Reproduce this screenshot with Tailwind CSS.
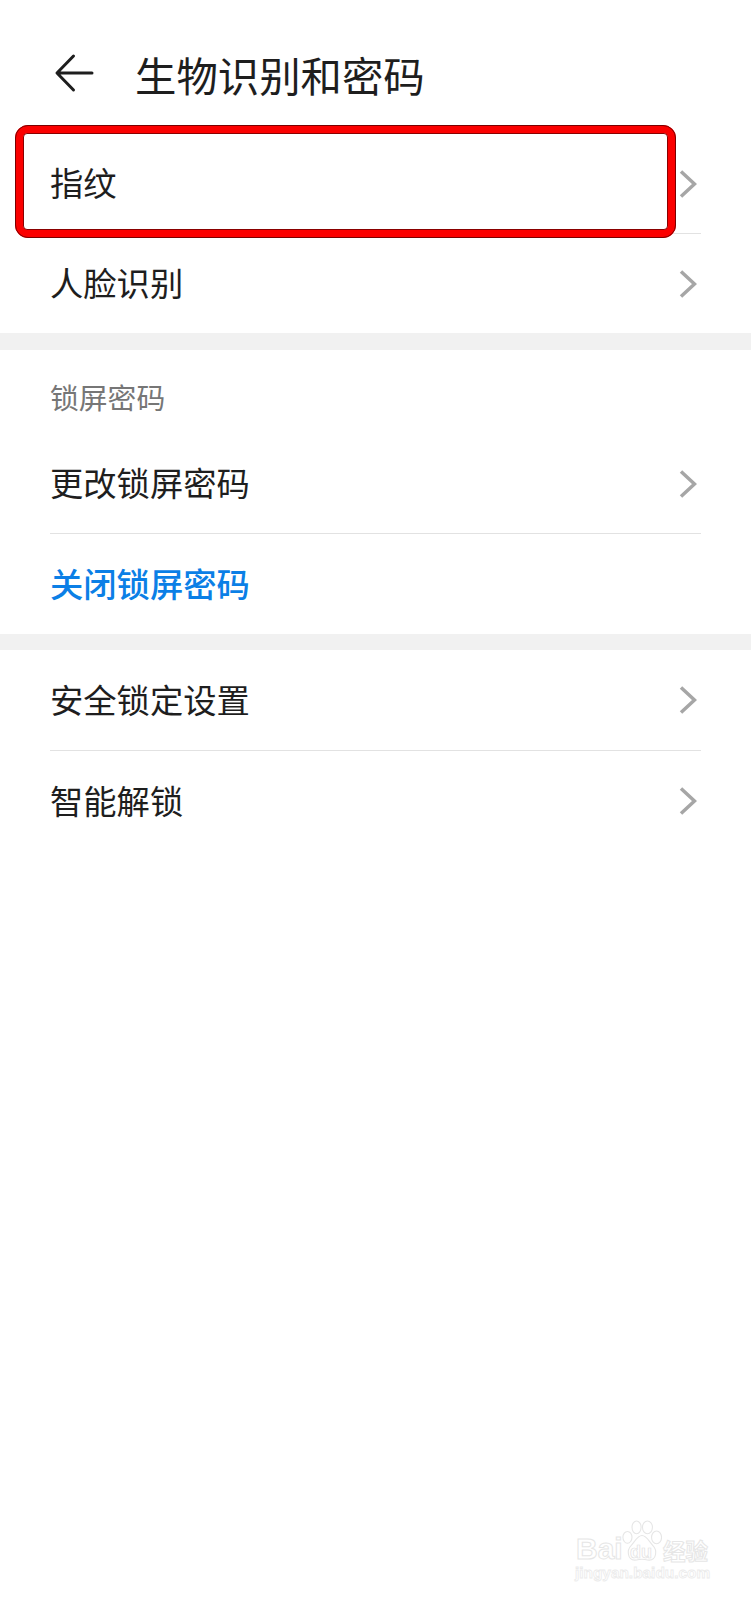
<!DOCTYPE html>
<html lang="zh-CN">
<head>
    <meta charset="UTF-8">
    <meta name="viewport" content="width=device-width, initial-scale=1.0">
    <title>生物识别和密码</title>
    <script src="https://cdn.jsdelivr.net/npm/@tailwindcss/browser@4"></script>
</head>
<body class="bg-white font-['Noto_Sans_CJK_SC','Noto_Sans',sans-serif] text-[#1e1e1e]">
    <div class="relative w-[751px] h-[1600px] overflow-hidden">
        <!-- Header -->
        <div class="flex items-center h-[134px] pt-[16px] pl-[54px]">
            <svg class="w-[42px] h-[42px] shrink-0 -mt-[2px]" viewBox="0 0 42 42" fill="none" stroke="#1e1e1e" stroke-width="3" stroke-linecap="round" stroke-linejoin="round">
                <path d="M38 20H3.500M19.500 3 3 20l16.500 17"/>
            </svg>
            <h1 class="ml-[39px] text-[41.400px] leading-none">生物识别和密码</h1>
        </div>

        <!-- Biometrics -->
        <div class="pl-[50px] pr-[50px]">
            <div class="flex items-center justify-between h-[99px] text-[33.300px]">
                <span class="-mt-[3px]">指纹</span>
                <svg class="w-[18px] h-[28px] mr-[4px]" viewBox="0 0 18 28" fill="none" stroke="#a6a6a6" stroke-width="3.500"><path d="M2 1.500 15.500 14 2 26.500"/></svg>
            </div>
            <div class="h-px bg-[#e2e2e2]"></div>
            <div class="flex items-center justify-between h-[99px] text-[33.300px]">
                <span class="-mt-[3px]">人脸识别</span>
                <svg class="w-[18px] h-[28px] mr-[4px]" viewBox="0 0 18 28" fill="none" stroke="#a6a6a6" stroke-width="3.500"><path d="M2 1.500 15.500 14 2 26.500"/></svg>
            </div>
        </div>
        <div class="h-[17px] bg-[#f1f1f1]"></div>

        <!-- Lock screen password -->
        <div class="pl-[50px] pr-[50px]">
            <div class="flex items-end h-[84px] pb-[22px] text-[28.800px] leading-none text-[#767676]">锁屏密码</div>
            <div class="flex items-center justify-between h-[99px] text-[33.300px]">
                <span class="-mt-[3px]">更改锁屏密码</span>
                <svg class="w-[18px] h-[28px] mr-[4px]" viewBox="0 0 18 28" fill="none" stroke="#a6a6a6" stroke-width="3.500"><path d="M2 1.500 15.500 14 2 26.500"/></svg>
            </div>
            <div class="h-px bg-[#e2e2e2]"></div>
            <div class="flex items-center h-[100px] text-[33.300px] font-medium text-[#0b7fe6]">
                <span class="-mt-[3px]">关闭锁屏密码</span>
            </div>
        </div>
        <div class="h-[16px] bg-[#f1f1f1]"></div>

        <!-- Other -->
        <div class="pl-[50px] pr-[50px]">
            <div class="flex items-center justify-between h-[100px] text-[33.300px]">
                <span class="-mt-[3px]">安全锁定设置</span>
                <svg class="w-[18px] h-[28px] mr-[4px]" viewBox="0 0 18 28" fill="none" stroke="#a6a6a6" stroke-width="3.500"><path d="M2 1.500 15.500 14 2 26.500"/></svg>
            </div>
            <div class="h-px bg-[#e2e2e2]"></div>
            <div class="flex items-center justify-between h-[100px] text-[33.300px]">
                <span class="-mt-[3px]">智能解锁</span>
                <svg class="w-[18px] h-[28px] mr-[4px]" viewBox="0 0 18 28" fill="none" stroke="#a6a6a6" stroke-width="3.500"><path d="M2 1.500 15.500 14 2 26.500"/></svg>
            </div>
        </div>

        <!-- Red highlight box -->
        <div class="absolute left-[15px] top-[125px] w-[661px] h-[113px] rounded-[13px] border-[8px] border-[#fb0000] outline outline-1 -outline-offset-1 outline-[#7a0000]">
            <div class="w-full h-full rounded-[4px] border border-[#8a0000]"></div>
        </div>

        <!-- Watermark -->
        <div class="absolute left-[575px] top-[1518px] w-[140px] h-[66px] font-['Liberation_Sans',sans-serif] text-white">
            <span class="absolute left-[1px] top-[16px] text-[30px] leading-none font-bold [-webkit-text-stroke:1px_#e6e6e6]">Bai</span>
            <svg class="absolute left-[47px] top-0 w-[40px] h-[46px]" viewBox="0 0 44 46" fill="#fff" stroke="#e6e6e6" stroke-width="1.200">
                <ellipse cx="6" cy="19" rx="5" ry="6.500"/>
                <ellipse cx="16" cy="8" rx="5" ry="7"/>
                <ellipse cx="28" cy="8" rx="5.500" ry="7"/>
                <ellipse cx="38" cy="19" rx="5.500" ry="7"/>
                <path d="M22 17c-5 0-8 7-12 11-5 5-4 16 4 16 3 0 6-1 8-1s5 1 8 1c8 0 9-11 4-16-4-4-7-11-12-11z"/>
            </svg>
            <span class="absolute left-[55px] top-[25px] text-[18px] leading-none font-bold [-webkit-text-stroke:0.700px_#e2e2e2]">du</span>
            <span class="absolute left-[88px] top-[21px] text-[22.500px] leading-none font-bold font-['Noto_Sans_CJK_SC',sans-serif] [-webkit-text-stroke:1px_#e6e6e6]">经验</span>
            <span class="absolute left-0 top-[47px] text-[15.400px] leading-none font-bold [-webkit-text-stroke:0.800px_#ebebeb]">jingyan.baidu.com</span>
        </div>
    </div>
</body>
</html>
